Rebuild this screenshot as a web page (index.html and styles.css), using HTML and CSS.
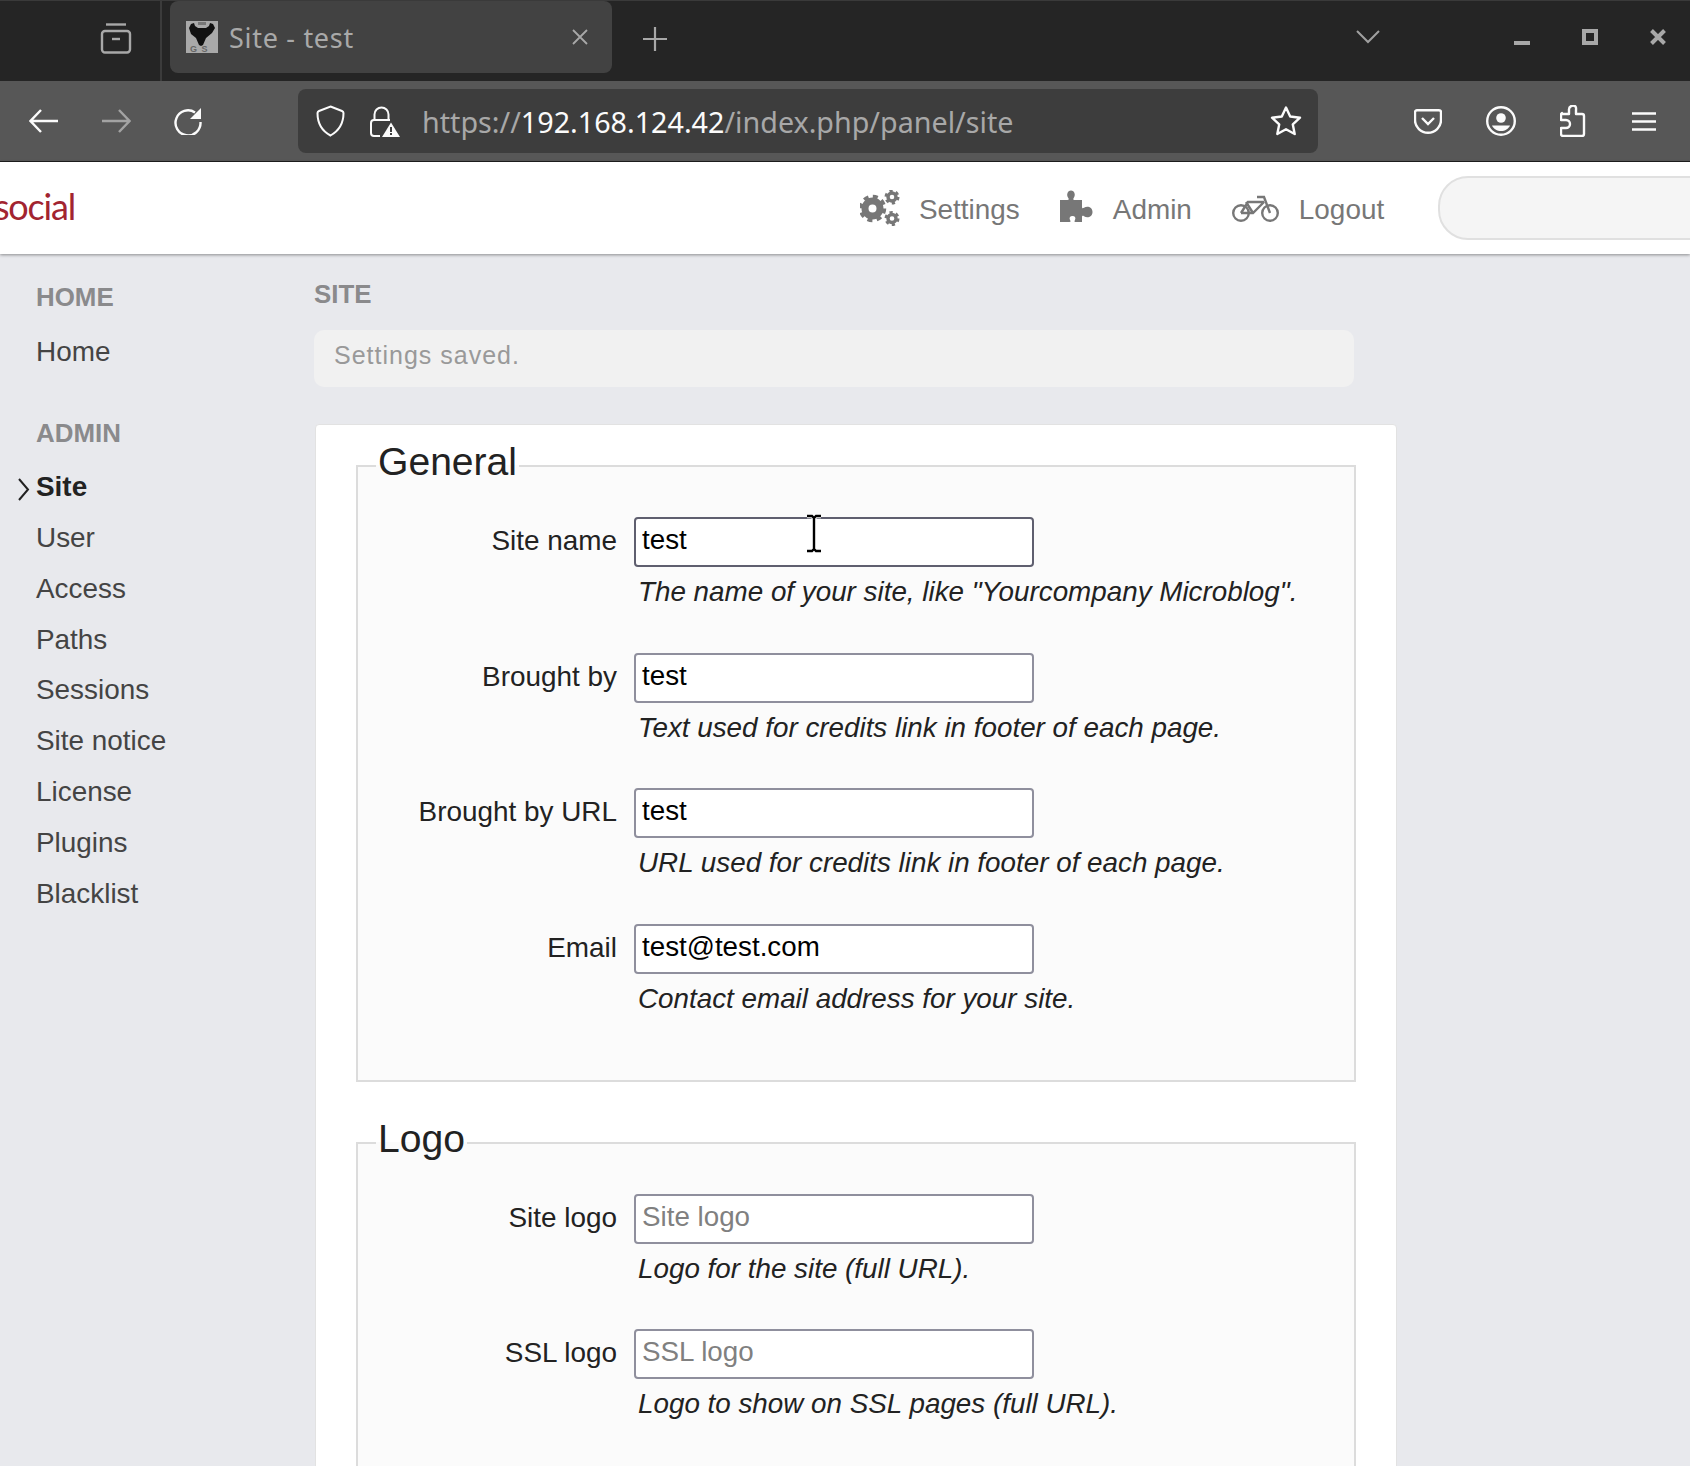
FILE: index.html
```html
<!DOCTYPE html>
<html lang="en">
<head>
    <meta charset="UTF-8">
    <title>Site - test</title>
    <link rel="stylesheet" href="styles.css">
</head>
<body>

<!--browser: tab strip-->
<div class="titlebar">
    <svg class="ic-tabs" viewBox="0 0 32 32" fill="none" stroke="#a8a8a8" stroke-width="2.4"><path d="M6 2.500h20"/><rect x="2" y="9" width="28" height="21.500" rx="3"/><path d="M12 17h8"/></svg>
    <span class="tab-sep"></span>
    <div class="tab">
        <svg class="favicon" viewBox="0 0 32 32"><rect width="32" height="32" fill="#a9a9a9"/><path d="M3 7l2-4 3-1 1 3 3 2h8l3-2 1-3 3 1 2 4-3 5-6 5-3 7-2 1-2-1-3-7-5-4z" fill="#111"/><path d="M12 1h8v3h-8z" fill="#777"/><text class="fav-text" x="4" y="31">G S</text></svg>
        <span class="tab-title">Site - test</span>
        <svg class="ic-close" viewBox="0 0 18 18" stroke="#a8a8a8" stroke-width="1.800"><path d="M2 2l14 14M16 2L2 16"/></svg>
    </div>
    <svg class="ic-plus" viewBox="0 0 24 24" stroke="#a8a8a8" stroke-width="2.200"><path d="M12 0v24M0 12h24"/></svg>
    <svg class="ic-chevron" viewBox="0 0 24 14" fill="none" stroke="#a0a0a0" stroke-width="2"><path d="M1 1l11 11L23 1"/></svg>
    <span class="win-min"></span>
    <span class="win-max"></span>
    <svg class="win-close" viewBox="0 0 16 16" stroke="#a8a8a8" stroke-width="4"><path d="M1.500 1.500l13 13M14.500 1.500l-13 13"/></svg>
</div>

<!--browser: toolbar-->
<div class="toolbar">
    <svg class="ic-back" viewBox="0 0 29 24" fill="none" stroke="#fbfbfb" stroke-width="2.400"><path d="M29 12H2M12 1L1.500 12 12 23"/></svg>
    <svg class="ic-forward" viewBox="0 0 29 24" fill="none" stroke="#a3a3a3" stroke-width="2.400"><path d="M0 12h27M17 1l10.500 11L17 23"/></svg>
    <svg class="ic-reload" viewBox="0 0 28 28" fill="none" stroke="#fbfbfb" stroke-width="2.400"><path d="M21 5.500A12.500 12.500 0 1 0 26.500 15"/><path d="M27 1v11H16z" fill="#fbfbfb" stroke="none"/></svg>
    <div class="urlbar">
        <svg class="ic-shield" viewBox="0 0 29 32" fill="none" stroke="#fbfbfb" stroke-width="2"><path d="M14.500 1.500L26 6q1.500.6 1.500 2c0 10-5 18-13 22.500C6 26 1.500 18 1.500 8q0-1.400 1.500-2z"/></svg>
        <svg class="ic-lock" viewBox="0 0 30 31" fill="none" stroke="#fbfbfb" stroke-width="2"><path d="M4.500 14V8.500a7 7 0 0 1 14 0V14"/><path d="M20 14H4a3 3 0 0 0-3 3v10a3 3 0 0 0 3 3h6"/><path d="M21 16.500l9 14.500H12z" fill="#fbfbfb" stroke="none"/><path d="M21 21v5M21 27v2" stroke="#3d3d3d" stroke-width="2"/></svg>
        <span class="url"><span class="url-dim">https://</span>192.168.124.42<span class="url-dim">/index.php/panel/site</span></span>
        <svg class="ic-star" viewBox="0 0 32 30" fill="none" stroke="#fbfbfb" stroke-width="2.400" stroke-linejoin="round"><path d="M16 1.500l4.200 9 9.800 1.200-7.200 6.700 1.900 9.600-8.700-4.800-8.700 4.800 1.900-9.600L2 11.700l9.800-1.200z"/></svg>
    </div>
    <svg class="ic-pocket" viewBox="0 0 28 25" fill="none" stroke="#fbfbfb" stroke-width="2.400"><path d="M3 1.200h22a2 2 0 0 1 2 2V11c0 7-6 12.800-13 12.800S1 18 1 11V3.200a2 2 0 0 1 2-2z"/><path d="M8 9l6 6 6-6"/></svg>
    <svg class="ic-account" viewBox="0 0 30 30" fill="none" stroke="#fbfbfb" stroke-width="2.400"><circle cx="15" cy="15" r="13.800"/><circle cx="15" cy="12" r="4.800" fill="#fbfbfb" stroke="none"/><path d="M6 19.500h18c-1.500 3.500-5 5.500-9 5.500s-7.500-2-9-5.500z" fill="#fbfbfb" stroke="none"/></svg>
    <svg class="ic-ext" viewBox="0 0 26 32" fill="none" stroke="#fbfbfb" stroke-width="2.400" stroke-linejoin="round"><path d="M2 9h7V5a4 4 0 0 1 6.500-3.500c1 1 .5 3 .5 4V9h6a2 2 0 0 1 2 2v18a2 2 0 0 1-2 2H3a2 2 0 0 1-2-2v-6h5a3.500 3.500 0 0 0 0-8H1v-5a2 2 0 0 1 1-2z"/></svg>
    <svg class="ic-menu" viewBox="0 0 24 19" stroke="#fbfbfb" stroke-width="2.400"><path d="M0 1.500h24M0 9.500h24M0 17.500h24"/></svg>
</div>

<!--site header-->
<div class="header">
    <div class="logo"><span>social</span></div>
    <ul class="nav">
        <li class="nav-settings">
            <svg class="ic-gears" viewBox="0 0 40 36"><g fill="none" stroke="#777"><circle cx="12.500" cy="18.500" r="7.500" stroke-width="7"/><circle cx="12.500" cy="18.500" r="12" stroke-width="3.500" stroke-dasharray="5 4.420"/><circle cx="32" cy="7" r="4" stroke-width="3.400"/><circle cx="32" cy="7" r="6.200" stroke-width="2.600" stroke-dasharray="3.200 3.290"/><circle cx="32" cy="28.500" r="4" stroke-width="3.400"/><circle cx="32" cy="28.500" r="6.200" stroke-width="2.600" stroke-dasharray="3.200 3.290"/></g></svg>
            <span class="nav-text">Settings</span>
        </li>
        <li class="nav-admin">
            <svg class="ic-puzzle" viewBox="0 0 33 32"><path d="M0 10h7.500c1.500 0 1.500-1 .8-2C6 5 7.500 .5 11 .5S16 5 13.700 8c-.7 1-.7 2 .8 2H22v7c0 1.500 1 1.500 2 .8 3-2.300 8.500-1 8.500 4.200s-5.500 6.500-8.500 4.200c-1-.7-2-.7-2 .8V32h-6.500c-1.500 0-1.200-1-.5-2 1-2 .2-4-2.500-4s-3.500 2-2.500 4c.7 1 1 2-.5 2H0z" fill="#777"/></svg>
            <span class="nav-text">Admin</span>
        </li>
        <li class="nav-logout">
            <svg class="ic-bike" viewBox="0 0 47 27" fill="none" stroke="#777" stroke-width="2.400"><circle cx="9" cy="18" r="7.800"/><circle cx="38" cy="18" r="7.800"/><path d="M9 18L16 7h16M9 18h12L32 7M14 7l7 11M25 2h7l6 16"/></svg>
            <span class="nav-text">Logout</span>
        </li>
    </ul>
    <div class="search"></div>
</div>

<div class="main">
    <!--left menu-->
    <div class="side">
        <h4 class="side-title">HOME</h4>
        <ul class="side-list">
            <li>Home</li>
        </ul>
        <h4 class="side-title">ADMIN</h4>
        <ul class="side-list">
            <li class="current">
                <svg class="ic-current" viewBox="0 0 12 23" fill="none" stroke="#222" stroke-width="2"><path d="M1 1l9 10.500L1 22"/></svg>
                Site
            </li>
            <li>User</li>
            <li>Access</li>
            <li>Paths</li>
            <li>Sessions</li>
            <li>Site notice</li>
            <li>License</li>
            <li>Plugins</li>
            <li>Blacklist</li>
        </ul>
    </div>

    <!--content-->
    <div class="content">
        <h4 class="page-title">SITE</h4>
        <div class="notice">Settings saved.</div>
        <div class="card">
            <fieldset class="group">
                <legend>General</legend>
                <div class="row">
                    <label>Site name</label>
                    <input class="hover" type="text" value="test">
                    <span class="hint">The name of your site, like "Yourcompany Microblog".</span>
                </div>
                <div class="row">
                    <label>Brought by</label>
                    <input type="text" value="test">
                    <span class="hint">Text used for credits link in footer of each page.</span>
                </div>
                <div class="row">
                    <label>Brought by URL</label>
                    <input type="text" value="test">
                    <span class="hint">URL used for credits link in footer of each page.</span>
                </div>
                <div class="row">
                    <label>Email</label>
                    <input type="text" value="test@test.com">
                    <span class="hint">Contact email address for your site.</span>
                </div>
            </fieldset>
            <fieldset class="group">
                <legend>Logo</legend>
                <div class="row">
                    <label>Site logo</label>
                    <input type="text" placeholder="Site logo">
                    <span class="hint">Logo for the site (full URL).</span>
                </div>
                <div class="row">
                    <label>SSL logo</label>
                    <input type="text" placeholder="SSL logo">
                    <span class="hint">Logo to show on SSL pages (full URL).</span>
                </div>
            </fieldset>
        </div>
    </div>
</div>

<!--mouse pointer over the first field-->
<svg class="pointer" viewBox="0 0 16 39" fill="none"><path d="M1 2h5l2 2 2-2h5M8 3.500v32M1 37h5l2-2 2 2h5" stroke="#fff" stroke-width="4.500"/><path d="M1 2h5l2 2 2-2h5M8 3.500v32M1 37h5l2-2 2 2h5" stroke="#000" stroke-width="2.400"/></svg>

</body>
</html>
```

FILE: styles.css
```css
* {
    margin: 0;
    padding: 0;
    list-style: none;
    box-sizing: border-box;
}

html, body {
    height: 1466px;
    overflow: hidden;
}

body {
    position: relative;
    background-color: #e8e9ed;
    font-family: "Liberation Sans", Arial, sans-serif;
    color: #222;
}

svg {
    display: block;
    flex: none;
}

/*browser: tab strip*/
.titlebar {
    height: 81px;
    padding-left: 100px;
    display: flex;
    align-items: center;
    background-color: #252525;
    border-top: 1px solid #3a3a3a;
}

.ic-tabs { width: 32px; height: 32px; margin-top: -6px; }

.tab-sep {
    width: 2px;
    height: 80px;
    margin-left: 28px;
    background-color: #3b3b3b;
}

.tab {
    width: 442px;
    height: 72px;
    margin-left: 8px;
    margin-top: -8px;
    padding-left: 16px;
    display: flex;
    align-items: center;
    background-color: #424242;
    border-radius: 8px;
}

.favicon { width: 32px; height: 32px; }

.fav-text {
    font-family: "Liberation Sans", sans-serif;
    font-size: 9px;
    font-weight: bold;
    letter-spacing: 1px;
    fill: #666;
}

.tab-title {
    margin-left: 11px;
    font-family: "Noto Sans", sans-serif;
    font-size: 27px;
    letter-spacing: 0.7px;
    color: #a9a9a9;
}

.ic-close { width: 18px; height: 18px; margin-left: auto; margin-right: 23px; }
.ic-plus { width: 24px; height: 24px; margin-left: 31px; margin-top: -4px; }
.ic-chevron { width: 24px; height: 14px; margin-left: 689px; margin-top: -8px; }

.win-min {
    width: 16px;
    height: 4px;
    margin-left: 134px;
    margin-top: 4px;
    background-color: #a8a8a8;
}

.win-max {
    width: 16px;
    height: 16px;
    margin-left: 52px;
    margin-top: -8px;
    border: 4px solid #a8a8a8;
}

.win-close { width: 16px; height: 16px; margin-left: 52px; margin-top: -8px; }

/*browser: toolbar*/
.toolbar {
    height: 81px;
    padding-left: 29px;
    display: flex;
    align-items: center;
    background-color: #575757;
    border-bottom: 1px solid #1f1f1f;
}

.ic-back { width: 29px; height: 24px; }
.ic-forward { width: 29px; height: 24px; margin-left: 44px; }
.ic-reload { width: 28px; height: 28px; margin-left: 43px; }

.urlbar {
    width: 1020px;
    height: 64px;
    margin-left: 96px;
    padding-left: 18px;
    display: flex;
    align-items: center;
    background-color: #3d3d3d;
    border-radius: 8px;
}

.ic-shield { width: 29px; height: 32px; }
.ic-lock { width: 30px; height: 31px; margin-left: 25px; }

.url {
    margin-left: 22px;
    font-family: "Noto Sans", sans-serif;
    font-size: 28.7px;
    color: #fbfbfb;
}

.url-dim { color: #a8a8a8; }

.ic-star { width: 32px; height: 30px; margin-left: auto; margin-right: 16px; }
.ic-pocket { width: 28px; height: 25px; margin-left: 96px; }
.ic-account { width: 30px; height: 30px; margin-left: 44px; }
.ic-ext { width: 26px; height: 32px; margin-left: 44px; }
.ic-menu { width: 24px; height: 19px; margin-left: 46px; }

/*site header*/
.header {
    height: 92px;
    display: flex;
    align-items: center;
    background-color: #fff;
    box-shadow: 0 1px 3px rgba(0, 0, 0, 0.4);
    position: relative;
}

.logo {
    width: 76px;
    padding: 0 1px 4px 0;
    flex: none;
    display: flex;
    justify-content: flex-end;
    overflow: hidden;
    font-family: Lato, sans-serif;
    font-size: 36px;
    letter-spacing: -1.2px;
    color: #a22430;
}

.nav {
    margin-left: 784px;
    display: flex;
    font-size: 27.9px;
    color: #777;
    flex: none;
}

.nav li {
    display: flex;
    align-items: center;
    gap: 20px;
}

.nav-text { margin-top: 4px; }

.nav li.nav-settings { gap: 19px; }
.nav-admin { margin-left: 40px; }
.nav-logout { margin-left: 40px; }

.ic-gears { width: 40px; height: 36px; }
.ic-puzzle { width: 33px; height: 32px; margin-top: -4px; }
.ic-bike { width: 47px; height: 27px; }

.search {
    width: 320px;
    height: 64px;
    margin-left: 54px;
    flex: none;
    background-color: #f5f5f5;
    border: 2px solid #e0e0e0;
    border-radius: 30px;
}

/*left menu*/
.main {
    display: flex;
}

.side {
    width: 314px;
    padding: 23px 0 0 36px;
    flex: none;
}

.side-title {
    font-size: 25.9px;
    line-height: 40px;
    font-weight: bold;
    color: #8a8a8c;
    margin-bottom: 9.500px;
}

.side-list {
    margin-bottom: 35.500px;
}

.side-list li {
    position: relative;
    font-size: 27.9px;
    line-height: 50.800px;
    color: #444;
}

.side-list li.current {
    font-weight: bold;
    color: #222;
}

.ic-current {
    position: absolute;
    left: -18px;
    top: 16px;
    width: 12px;
    height: 23px;
}

/*content*/
.content {
    width: 1083px;
    flex: none;
    padding-top: 20px;
}

.page-title {
    font-size: 25.900px;
    line-height: 40px;
    font-weight: bold;
    color: #8a8a8c;
}

.notice {
    width: 1040px;
    height: 57px;
    margin-top: 16px;
    padding-left: 20px;
    font-size: 25px;
    line-height: 50px;
    letter-spacing: 1px;
    color: #999;
    background-color: #f1f1f1;
    border-radius: 10px;
}

.card {
    width: 1082px;
    height: 1100px;
    margin: 37px 0 0 1px;
    padding: 15px 0 0 40px;
    background-color: #fff;
    border: 1px solid #e2e2e2;
    border-radius: 4px;
}

.group {
    width: 1000px;
    min-width: 0;
    padding: 25px 0 20px;
    margin-bottom: 35px;
    background-color: #fbfbfb;
    border: 2px solid #dcdcdc;
}

.group legend {
    margin-left: 18px;
    padding: 0 2px 8px;
    font-size: 39.100px;
    line-height: 44px;
    color: #222;
}

.row {
    display: grid;
    grid-template-columns: 259px 400px;
    column-gap: 17px;
    margin-bottom: 42.700px;
}

.row label {
    text-align: right;
    font-size: 27.900px;
    line-height: 47px;
}

.row input {
    width: 400px;
    height: 50px;
    padding: 0 6px 4px;
    font-family: "Liberation Sans", Arial, sans-serif;
    font-size: 27.750px;
    color: #000;
    background-color: #fff;
    border: 2px solid #8f8f9d;
    border-radius: 4px;
    outline: none;
}

.row input.hover {
    border-color: #5f5f6f;
}

.row input::placeholder {
    color: #808080;
}

.hint {
    grid-column: 2 / 4;
    margin-top: 7px;
    padding-left: 4px;
    font-size: 27.800px;
    line-height: 36px;
    font-style: italic;
    white-space: nowrap;
}

/*mouse pointer*/
.pointer {
    position: absolute;
    left: 806px;
    top: 514px;
    width: 16px;
    height: 39px;
}
```
